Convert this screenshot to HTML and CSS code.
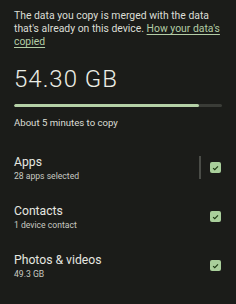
FILE: index.html
```html
<!DOCTYPE html>
<html lang="en">
<head>
    <meta charset="UTF-8">
    <meta name="viewport" content="width=device-width, initial-scale=1.0">
    <title>Copy data</title>
    <link rel="stylesheet" href="styles.css">
</head>
<body>

    <main class="page">
        <p class="notice">
            The data you copy is merged with the data that's already on this device.
            <a href="#" class="notice-link">How your data's copied</a>
        </p>

        <div class="total">54.30 GB</div>

        <div class="progress">
            <div class="progress-fill" style="width: 89%"></div>
        </div>

        <div class="eta">About 5 minutes to copy</div>

        <ul class="item-list">
            <li class="item">
                <div class="item-text">
                    <div class="item-title">Apps</div>
                    <div class="item-sub">28 apps selected</div>
                </div>
                <div class="item-divider"></div>
                <span class="check">
                    <svg viewBox="0 0 12 12" width="12" height="12"><path d="M3.4 6.2 L5.2 7.9 L8.7 4.3" fill="none" stroke="#1d3a12" stroke-width="1.3"/></svg>
                </span>
            </li>
            <li class="item">
                <div class="item-text">
                    <div class="item-title">Contacts</div>
                    <div class="item-sub">1 device contact</div>
                </div>
                <span class="check">
                    <svg viewBox="0 0 12 12" width="12" height="12"><path d="M3.4 6.2 L5.2 7.9 L8.7 4.3" fill="none" stroke="#1d3a12" stroke-width="1.3"/></svg>
                </span>
            </li>
            <li class="item">
                <div class="item-text">
                    <div class="item-title">Photos &amp; videos</div>
                    <div class="item-sub">49.3 GB</div>
                </div>
                <span class="check">
                    <svg viewBox="0 0 12 12" width="12" height="12"><path d="M3.4 6.2 L5.2 7.9 L8.7 4.3" fill="none" stroke="#1d3a12" stroke-width="1.3"/></svg>
                </span>
            </li>
            <li class="item item-last">
                <div class="item-text">
                    <div class="item-title">Media &amp; files</div>
                </div>
            </li>
        </ul>
    </main>

</body>
</html>
```

FILE: styles.css
```css
body {
    margin: 0;
    padding: 0;
    background-color: #1b1c19;
    font-family: 'Roboto', 'Liberation Sans', sans-serif;
    color: #e3e4dd;
    height: 304px;
    overflow: hidden;
}

.page {
    padding: 9px 14px 0 14px;
}

.notice {
    margin: 0;
    font-size: 10.4px;
    line-height: 13px;
    color: #dcded6;
}

.notice-link {
    color: #b3cda6;
    text-decoration: underline;
    text-underline-offset: 2px;
}

.total {
    margin-top: 18px;
    font-size: 24px;
    font-weight: 300;
    letter-spacing: 1px;
    line-height: 27px;
    color: #eceee6;
}

.progress {
    margin-top: 11px;
    height: 3px;
    background-color: #3a3c37;
    border-radius: 2px;
    overflow: hidden;
}

.progress-fill {
    height: 100%;
    background-color: #b4d0a6;
    border-radius: 2px;
}

.eta {
    margin-top: 9px;
    font-size: 9.6px;
    line-height: 13px;
    color: #dcded6;
}

.item-list {
    list-style-type: none;
    margin: 0;
    padding: 0;
    margin-top: 14px;
}

.item {
    display: flex;
    align-items: center;
    height: 49px;
}

.item-text {
    flex-grow: 1;
}

.item-title {
    font-size: 12.2px;
    line-height: 16px;
    color: #e6e7e0;
}

.item-sub {
    font-size: 8.6px;
    line-height: 12px;
    color: #c8cac2;
}

.item-last {
    align-items: flex-start;
    padding-top: 19px;
}

.item-divider {
    width: 2px;
    height: 23px;
    background-color: #4a4c47;
    margin-right: 9px;
}

.check {
    width: 11px;
    height: 11px;
    border-radius: 2px;
    background-color: #a9cf9b;
    display: flex;
    align-items: center;
    justify-content: center;
    margin-right: 1px;
}

.check svg {
    display: block;
}
```
